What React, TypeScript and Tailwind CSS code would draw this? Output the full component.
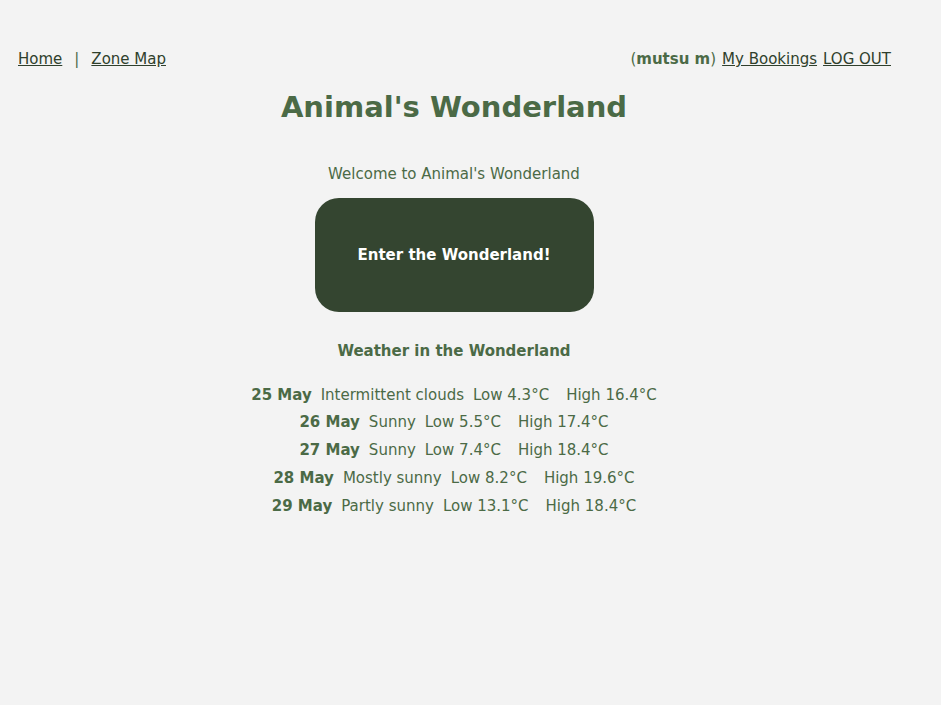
import React from 'react';

const weather = [
    { date: '25 May', desc: 'Intermittent clouds', low: '4.3', high: '16.4' },
    { date: '26 May', desc: 'Sunny', low: '5.5', high: '17.4' },
    { date: '27 May', desc: 'Sunny', low: '7.4', high: '18.4' },
    { date: '28 May', desc: 'Mostly sunny', low: '8.2', high: '19.6' },
    { date: '29 May', desc: 'Partly sunny', low: '13.1', high: '18.4' },
];

const App: React.FC = () => {
    return (
        <div className="min-h-[705px] bg-[#f3f3f3] text-[#4b6a46] font-['DejaVu_Sans',sans-serif] text-[15px]">
            <nav className="flex items-center justify-between pl-[18px] pr-[50px] pt-[48px] text-[#2f3f2c]">
                <div className="flex items-center gap-[12px]">
                    <a href="#" className="underline">Home</a>
                    <span className="text-[#4b6a46]">|</span>
                    <a href="#" className="underline">Zone Map</a>
                </div>
                <div className="flex items-center gap-[6px]">
                    <span className="text-[#4b6a46]">(<b>mutsu m</b>)</span>
                    <a href="#" className="underline">My Bookings</a>
                    <a href="#" className="underline">LOG OUT</a>
                </div>
            </nav>

            <main className="w-[908px] flex flex-col items-center">
                <h1 className="text-[29px] font-bold mt-[16px] leading-[40px]">Animal's Wonderland</h1>
                <p className="mt-[36px]">Welcome to Animal's Wonderland</p>
                <button className="mt-[13px] w-[279px] h-[114px] rounded-[24px] bg-[#344530] text-white font-bold">
                    Enter the Wonderland!
                </button>
                <h2 className="mt-[28px] font-bold">Weather in the Wonderland</h2>
                <div className="mt-[19px] flex flex-col items-center">
                    {weather.map((w) => (
                        <div key={w.date} className="flex gap-[9px] leading-[27.75px]">
                            <b>{w.date}</b>
                            <span>{w.desc}</span>
                            <span className="flex gap-[17px]">
                                <span>Low {w.low}°C</span>
                                <span>High {w.high}°C</span>
                            </span>
                        </div>
                    ))}
                </div>
            </main>
        </div>
    );
};

export default App;
